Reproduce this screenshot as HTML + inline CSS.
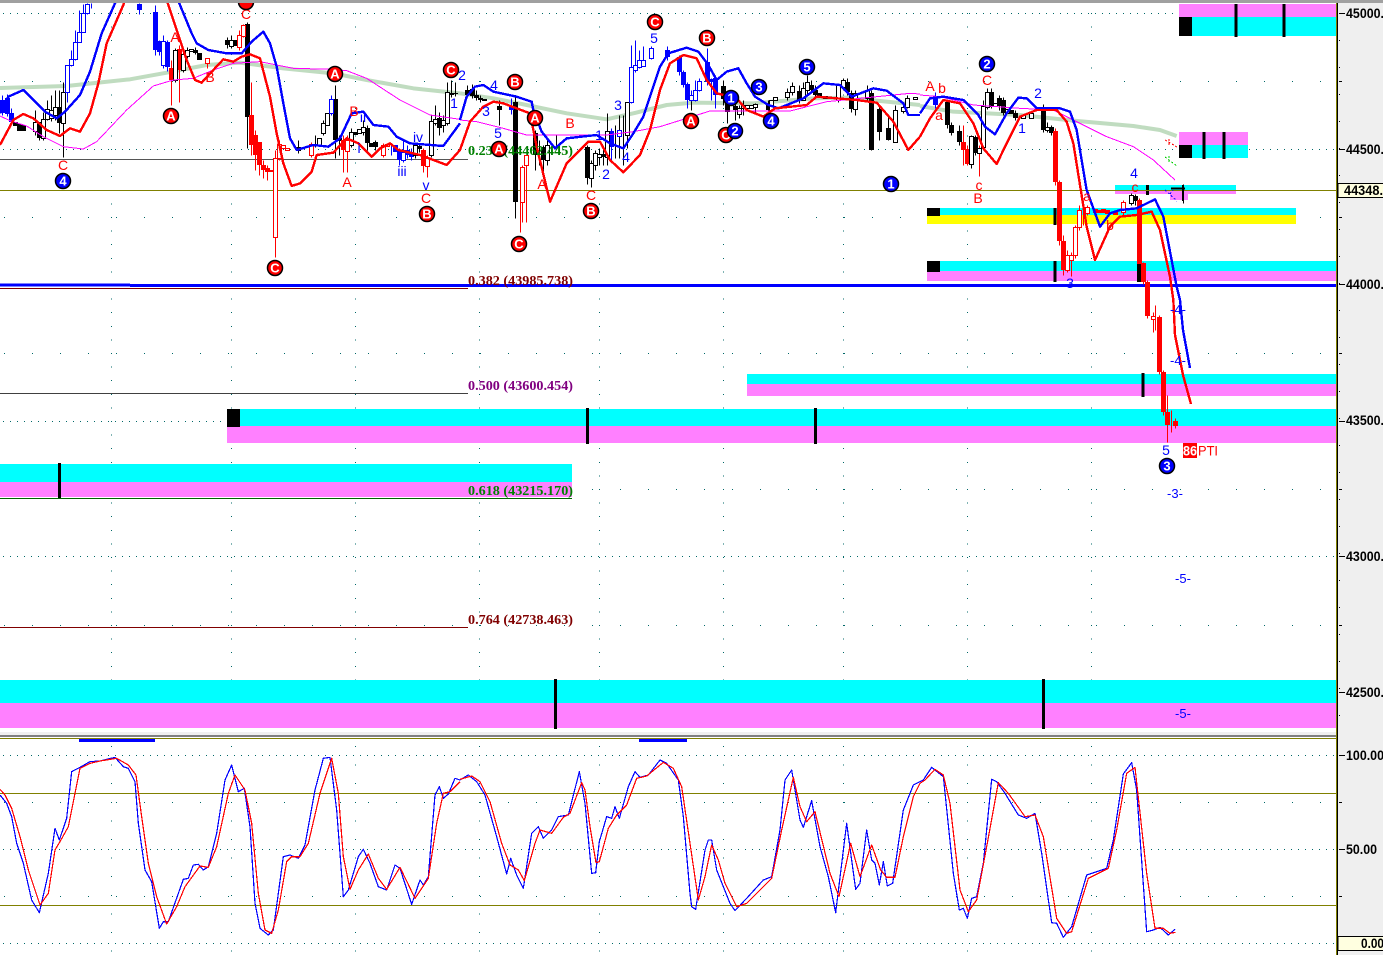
<!DOCTYPE html>
<html lang="en">
<head>
<meta charset="utf-8">
<title>Chart</title>
<style>
html,body{margin:0;padding:0;background:#fff;width:1383px;height:955px;overflow:hidden}
svg{display:block}
text{font-family:"Liberation Sans",sans-serif}
.l{font-size:14px;fill:#f00;text-anchor:middle}
.b{font-size:14px;fill:#00f;text-anchor:middle}
.s{font-size:13px;fill:#00f;text-anchor:middle}
.w{font-size:13px;font-weight:bold;fill:#fff;text-anchor:middle;transform:translateY(.5px)}
.f{font-family:"Liberation Serif",serif;font-size:14px;font-weight:bold}
.a{font-size:14px;font-weight:bold;fill:#000}
.cr{fill:#f00;stroke:#000;stroke-width:1.5}
.cb{fill:#00f;stroke:#000;stroke-width:1.5}
.z polyline{fill:none;vector-effect:non-scaling-stroke;stroke-linejoin:round}
</style>
</head>
<body>
<svg xmlns="http://www.w3.org/2000/svg" width="1383" height="955" viewBox="0 0 1383 955">
<defs><clipPath id="m"><rect x="0" y="3" width="1336" height="732"/></clipPath></defs>
<rect width="1383" height="955" fill="#fff"/>
<rect x="1337" y="0" width="46" height="955" fill="#efefef"/>

<!-- grid -->
<g fill="none" stroke="#006868" shape-rendering="crispEdges">
<path stroke-dasharray="1 6" d="M3 13.5H1336M3 149.5H1336M3 284.5H1336M3 421.5H1336M3 556.5H1336M3 692.5H1336M3 755.5H1336M3 849.5H1336M3 943.5H1336"/>
<path stroke-dasharray="1 27" d="M4 81.5H1336M4 217.5H1336M4 353.5H1336M4 489.5H1336M4 625.5H1336M4 802.5H1336M4 896.5H1336"/>
<path stroke-dasharray="1 12.6" d="M111.5 13V735M231.5 13V735M355.5 13V735M479.5 13V735M599.5 13V735M723.5 13V735M843.5 13V735M967.5 13V735M1091.5 13V735"/>
<path stroke-dasharray="1 17.6" d="M111.5 746V955M231.5 746V955M355.5 746V955M479.5 746V955M599.5 746V955M723.5 746V955M843.5 746V955M967.5 746V955M1091.5 746V955"/>
</g>

<!-- zones -->
<g shape-rendering="crispEdges">
<rect x="1179" y="4" width="157" height="13" fill="#ff80ff"/><rect x="1179" y="17" width="157" height="19" fill="#0ff"/><rect x="1179" y="17" width="13" height="19" fill="#000"/>
<rect x="1179" y="132" width="69" height="13" fill="#ff80ff"/><rect x="1179" y="145" width="69" height="13" fill="#0ff"/><rect x="1179" y="145" width="13" height="13" fill="#000"/>
<rect x="1115" y="185" width="121" height="5" fill="#0ff"/><rect x="1115" y="190" width="121" height="4" fill="#ff80ff"/><rect x="1170" y="194" width="18" height="6" fill="#ff80ff"/>
<rect x="927" y="208" width="369" height="7" fill="#0ff"/><rect x="927" y="215" width="369" height="9" fill="#ff0"/><rect x="927" y="208" width="13" height="8" fill="#000"/>
<rect x="927" y="261" width="409" height="10" fill="#0ff"/><rect x="927" y="271" width="409" height="10" fill="#ff80ff"/><rect x="927" y="261" width="13" height="11" fill="#000"/>
<rect x="747" y="374" width="589" height="10" fill="#0ff"/><rect x="747" y="384" width="589" height="12" fill="#ff80ff"/>
<rect x="227" y="409" width="1109" height="17" fill="#0ff"/><rect x="227" y="426" width="1109" height="17" fill="#ff80ff"/><rect x="227" y="409" width="13" height="18" fill="#000"/>
<rect x="0" y="464" width="572" height="18" fill="#0ff"/><rect x="0" y="482" width="572" height="15" fill="#ff80ff"/>
<rect x="0" y="680" width="1336" height="23" fill="#0ff"/><rect x="0" y="703" width="1336" height="25" fill="#ff80ff"/>
<path stroke="#000" stroke-width="3" fill="none" d="M1236 4V37M1284 4V37M1204 132V159M1224 132V159M1147.500 185V195M1055 261V282M1055 208V225M1143 373V397M587.500 408V444M815.500 408V444M59.500 463V499M555.500 679V729M1043.500 679V729"/>
</g>

<!-- horizontal levels -->
<g fill="none" shape-rendering="crispEdges">
<path stroke="#555" d="M0 159.500H468"/>
<path stroke="#808000" d="M0 190.500H1336"/>
<path stroke="#800000" d="M0 288.500H468M0 627.500H468"/>
<path stroke="#404040" d="M0 393.500H468"/>
<path stroke="#006400" d="M0 498.500H572"/>
<path stroke="#00f" stroke-width="3" d="M0 285H130"/>
<path stroke="#00f" stroke-width="3" d="M130 285.500H1336"/>
<path stroke="#808000" d="M0 738.500H1336M0 793.500H1336M0 905.500H1336"/>
</g>

<g clip-path="url(#m)">
<!-- sage MA -->
<g class="z">
<polyline transform="scale(.33333)" stroke="#c0dcc0" stroke-width="4" points="0,264 200,258 390,238 500,218 620,195 720,188 850,205 1000,220 1100,240 1240,265 1380,280"/>
<polyline transform="translate(460 0) scale(.33333)" stroke="#c0dcc0" stroke-width="4" points="0,280 100,295 200,315 320,340 440,358 520,340 620,315 700,308 880,310 1060,295 1160,293 1380,315"/>
<polyline transform="translate(920 0) scale(.33333)" stroke="#c0dcc0" stroke-width="4" points="0,318 100,335 300,345 460,362 640,378 720,390 770,408"/>
</g>

<!-- wicks -->
<g fill="none" stroke-width="1" transform="translate(.5 .5)" shape-rendering="crispEdges">
<path stroke="#000" d="M35 110V135M39 122V140M43 112V140M47 100V120M51 95V121M55 90V120M59 90V133M63 82V157M175 48V82M183 47V72M187 47V58M195 47V54M227 37V48M231 35V48M247 22V148M298 140V153M315 135V147M323 120V135M331 95V115M335 85V158M339 135V155M351 128V147M363 120V135M367 125V150M375 140V150M415 142V158M419 143V152M431 115V157M435 105V125M439 112V135M443 115V132M447 82V125M451 80V97M455 82V96M467 85V97M472 84V98M476 90V100M480 95V102M499 100V125M515 95V218M535 130V170M539 140V165M543 145V176M547 140V165M556 135V148M587 145V184M591 160V187M595 150V170M599 148V165M603 148V165M607 113V165M615 125V158M619 115V158M623 115V165M627 102V148M691 90V110M723 80V105M727 95V123M735 100V120M739 105V118M743 100V115M755 103V112M768 100V113M787 88V100M792 82V95M799 85V103M803 82V100M807 75V95M811 80V92M815 85V97M838 85V102M843 78V90M847 78V95M851 90V112M855 90V115M867 85V100M871 90V150M879 105V140M888 115V140M895 105V142M903 103V113M907 95V108M947 100V128M951 122V135M959 125V145M971 135V168M975 135V155M983 100V150M987 88V109M991 88V108M999 95V110M1003 97V115M1015 110V120M1043 104V132M1047 122V132M1051 125V135M1131 193V205M1135 194V205M1183 184V203"/>
<path stroke="#00f" d="M2 95V115M7 94V116M11 108V125M67 65V102M71 50V66M75 30V60M79 10V40M83 4V32M87 3V14M91 3V8M139 3V14M155 5V55M159 40V55M163 35V68M167 40V71M331 95V115M391 143V155M399 148V165M403 140V162M407 145V158M411 148V160M511 98V114M611 128V160M631 45V103M635 40V72M639 50V68M643 46V66M651 46V59M667 46V60M679 55V75M683 70V87M687 82V108M691 90V101M695 80V101M699 78V91M707 48V85M711 78V100M715 75V108M935 92V108"/>
<path stroke="#f00" d="M171 60V105M179 45V102M207 60V68M239 30V50M243 24V37M251 82V155M255 130V170M259 142V175M263 160V178M267 165V180M275 150V257M279 140V160M311 142V157M343 135V172M347 135V172M383 143V157M423 148V172M427 155V177M520 200V232M522 165V222M526 155V222M963 125V165M967 145V165M979 145V176M1055 128V185M1059 180V245M1063 235V275M1067 250V272M1071 252V276M1075 225V258M1079 205V230M1083 200V225M1087 205V215M1123 200V215M1139 198V266M1143 262V284M1147 280V318M1153 312V332M1155 305V330M1159 315V374M1163 370V415M1167 395V442M1171 410V432M1175 418V428"/>
</g>

<!-- solid bodies -->
<g fill="none" stroke-width="5" transform="translate(.5 0)" shape-rendering="crispEdges">
<path stroke="#000" d="M15 122V126M19 124V131M23 125V131M39 122V138M59 107V123M195 50V53M199 53V60M227 40V45M235 40V46M247 24V117M298 147V151M335 99V140M339 138V141M355 132V135M367 128V143M371 143V147M375 142V147M419 146V149M439 118V128M451 93V95M455 93V94M467 90V95M472 89V96M476 95V98M480 98V100M484 99V101M499 106V110M515 102V202M535 133V155M543 147V160M587 147V178M603 154V157M723 86V99M727 97V112M735 106V110M768 103V110M799 91V100M811 85V90M815 90V95M819 93V97M825 96V99M847 82V92M851 93V109M871 93V150M879 109V132M888 128V140M947 102V125M951 125V133M959 131V142M975 137V153M991 92V107M999 98V106M1003 100V113M1011 110V114M1015 113V118M1043 107V130M1051 127V133M1135 196V201M1139 264V282"/>
<path stroke="#00f" d="M2 100V113M7 98V114M11 113V122M139 4V10M155 12V50M159 41V52M167 42V67M395 145V152M399 150V160M407 150V155M411 152V157M511 106V110M611 131V147M667 50V57M679 57V72M683 72V85M687 84V100M707 62V82M711 79V82M715 78V95M935 98V105"/>
<path stroke="#f00" d="M171 68V80M179 49V70M251 115V145M255 135V155M259 142V165M263 165V170M267 168V172M271 170V172M343 140V150M423 150V166M963 142V150M967 149V164M1055 131V182M1059 182V241M1063 241V270M1095 209V213M1099 210V213M1103 209V213M1107 210V214M1115 212V215M1139 200V264M1143 263V282M1147 282V316M1159 317V372M1163 372V412M1167 412V425M1175 421V426"/>
</g>

<!-- hollow bodies -->
<g fill="#fff" stroke-width="1" transform="translate(.5 .5)" shape-rendering="crispEdges">
<path stroke="#000" d="M33 122h4v9h-4zM41 119h4v19h-4zM45 109h4v10h-4zM49 110h4v8h-4zM53 107h4v8h-4zM61 92h4v31h-4zM173 50h4v30h-4zM181 54h4v16h-4zM185 50h4v6h-4zM189 49h4v2h-4zM229 40h4v6h-4zM317 138h4v7h-4zM321 123h4v10h-4zM325 113h4v12h-4zM349 132h4v13h-4zM357 129h4v4h-4zM361 127h4v5h-4zM413 145h4v10h-4zM429 121h4v34h-4zM433 119h4v4h-4zM441 120h4v5h-4zM445 92h4v31h-4zM545 145h4v15h-4zM589 163h4v15h-4zM593 153h4v12h-4zM597 154h4v3h-4zM605 131h4v26h-4zM625 102h4v33h-4zM737 108h4v6h-4zM741 105h4v3h-4zM745 105h4v3h-4zM749 105h4v3h-4zM753 104h4v3h-4zM769 100h4v10h-4zM773 97h4v3h-4zM785 92h4v5h-4zM790 86h4v6h-4zM801 88h4v12h-4zM805 82h4v8h-4zM836 85h4v15h-4zM841 80h4v7h-4zM853 93h4v16h-4zM865 90h4v8h-4zM893 110h4v32h-4zM901 107h4v4h-4zM905 98h4v9h-4zM913 97h4v2h-4zM969 136h4v28h-4zM977 148h4v5h-4zM981 106h4v41h-4zM985 92h4v15h-4zM993 103h4v3h-4zM1005 109h4v4h-4zM1021 115h4v3h-4zM1029 113h4v5h-4zM1045 127h4v3h-4zM1129 195h4v8h-4z"/>
<path stroke="#00f" d="M65 65h4v27h-4zM69 59h4v6h-4zM73 42h4v17h-4zM77 32h4v10h-4zM81 13h4v19h-4zM85 4h4v9h-4zM161 41h4v24h-4zM329 99h4v14h-4zM401 152h4v8h-4zM617 130h4v6h-4zM629 67h4v35h-4zM633 65h4v5h-4zM637 60h4v7h-4zM641 60h4v6h-4zM649 48h4v10h-4zM689 95h4v5h-4zM693 90h4v10h-4zM697 81h4v9h-4z"/>
<path stroke="#f00" d="M205 58h4v5h-4zM237 35h4v12h-4zM241 25h4v11h-4zM273 158h4v79h-4zM277 144h4v14h-4zM281 145h4v3h-4zM285 148h4v2h-4zM309 144h4v11h-4zM345 140h4v11h-4zM381 145h4v10h-4zM385 144h4v2h-4zM425 158h4v8h-4zM520 167h4v35h-4zM524 155h4v10h-4zM1065 255h4v15h-4zM1069 255h4v5h-4zM1073 227h4v28h-4zM1077 210h4v17h-4zM1085 207h4v6h-4zM1121 202h4v10h-4zM1151 316h4v3h-4z"/>
</g>

<path fill="none" stroke="#000" stroke-width="2" shape-rendering="crispEdges" d="M1171 188.500H1185M1183 185V201"/>

<!-- bands -->
<g class="z" shape-rendering="crispEdges">
<polyline transform="scale(.33333)" stroke="#ff00ff" stroke-width="1" points="0,348 30,362 80,378 130,410 190,440 250,447 290,425 380,330 460,258 520,240 580,235 640,210 700,190 780,185 880,205 1000,208 1040,212 1100,235 1200,300 1290,345 1380,358"/>
<polyline transform="translate(460 0) scale(.33333)" stroke="#ff00ff" stroke-width="1" points="0,360 50,365 130,385 200,405 300,405 440,405 520,395 600,380 680,355 750,333 880,333 990,333 1100,305 1250,290 1350,280 1380,282"/>
<polyline transform="translate(920 0) scale(.33333)" stroke="#ff00ff" stroke-width="1" points="0,285 60,290 160,315 300,325 400,330 470,365 560,410 640,440 700,480 765,540"/>

<polyline transform="scale(.33333)" stroke="#00f" stroke-width="2.400" points="0,340 25,290 70,270 100,300 135,335 170,355 195,335 240,285 270,215 305,100 345,10 365,-30 520,-30 540,15 575,100 590,130 625,150 680,160 725,160 755,125 790,95 810,130 830,200 850,310 870,415 890,450 940,435 985,440 1020,415 1055,340 1090,335 1120,375 1165,380 1190,410 1230,430 1330,438 1380,370"/>
<polyline transform="translate(460 0) scale(.33333)" stroke="#00f" stroke-width="2.400" points="0,360 20,290 45,260 70,255 100,275 170,290 215,305 220,330 245,395 285,445 320,415 410,405 450,430 490,445 520,400 550,350 600,200 625,160 680,143 715,155 745,195 770,240 800,215 835,205 860,250 885,290 925,315 955,325 1030,295 1090,250 1140,255 1175,290 1240,265 1280,272 1330,310 1345,345 1380,345"/>
<polyline transform="translate(920 0) scale(.33333)" stroke="#00f" stroke-width="2.400" points="0,340 30,295 70,290 130,300 160,330 175,345 195,380 225,403 260,340 295,293 320,295 350,325 370,325 420,325 450,335 470,390 500,570 540,680 570,640 600,630 650,625 705,598 730,650 770,860 780,900 789,990 810,1104"/>

<polyline transform="scale(.33333)" stroke="#f00" stroke-width="2.400" points="0,435 40,360 70,342 100,355 140,390 180,408 210,385 240,395 270,340 295,250 320,130 370,15 385,-30 490,-30 505,15 530,90 560,180 585,240 605,248 640,210 670,178 700,185 725,170 750,163 780,175 810,290 830,400 850,490 875,558 900,550 935,515 950,465 1000,458 1040,415 1075,430 1115,470 1140,445 1170,430 1195,450 1260,465 1340,495 1380,450"/>
<polyline transform="translate(460 0) scale(.33333)" stroke="#f00" stroke-width="2.400" points="0,450 30,365 70,320 100,305 130,310 210,340 230,440 270,605 320,490 385,425 420,425 450,480 490,517 540,465 570,390 600,270 630,190 670,165 710,175 740,240 770,280 830,295 860,330 910,350 945,325 1040,315 1070,290 1130,295 1190,300 1250,308 1300,365 1345,450 1380,410"/>
<polyline transform="translate(920 0) scale(.33333)" stroke="#f00" stroke-width="2.400" points="0,410 30,355 70,300 120,310 160,370 190,445 230,492 260,430 300,350 350,330 410,330 440,365 460,430 500,680 525,780 570,680 600,650 650,645 695,635 720,690 750,830 760,900 765,1005 789,1125 813,1212"/>
</g>

<!-- fib labels -->
<text class="f" x="468" y="155" fill="#008000" textLength="105" lengthAdjust="spacingAndGlyphs">0.236 (44462.445)</text>
<text class="f" x="468" y="285" fill="#800000" textLength="105" lengthAdjust="spacingAndGlyphs">0.382 (43985.738)</text>
<text class="f" x="468" y="390" fill="#800080" textLength="105" lengthAdjust="spacingAndGlyphs">0.500 (43600.454)</text>
<text class="f" x="468" y="495" fill="#008000" textLength="105" lengthAdjust="spacingAndGlyphs">0.618 (43215.170)</text>
<text class="f" x="468" y="624" fill="#800000" textLength="105" lengthAdjust="spacingAndGlyphs">0.764 (42738.463)</text>

<!-- x marks -->
<g fill="none" stroke-dasharray="2 2" shape-rendering="crispEdges">
<path stroke="#f00" d="M1165 140L1177 147M1169 139V147"/>
<path stroke="#0c0" d="M1165 157L1177 166M1169 156V164"/>
<path stroke="#00f" d="M1165 190L1177 201M1170 194L1173 190"/>
</g>

<!-- letters -->
<text class="l" x="63" y="170">C</text><text class="l" x="246" y="19">C</text><text class="l" x="175" y="42">A</text><text class="l" x="210" y="82">B</text><text class="l" x="347" y="187">A</text><text class="l" x="354" y="116">B</text><text class="l" x="426" y="203">C</text><text class="l" x="570" y="128">B</text><text class="l" x="542" y="189">A</text><text class="l" x="591" y="200">C</text><text class="l" x="930" y="91">A</text><text class="l" x="942" y="93">b</text><text class="l" x="939" y="120">a</text><text class="l" x="987" y="85">C</text><text class="l" x="979" y="190">c</text><text class="l" x="978" y="203">B</text><text class="l" x="1087" y="201">a</text><text class="l" x="1110" y="230">b</text><text class="l" x="1135" y="192">c</text>
<text class="b" x="363" y="122">ii</text><text class="b" x="359" y="153">i</text><text class="b" x="402" y="176">iii</text><text class="b" x="418" y="142">iv</text><text class="b" x="426" y="190">v</text><text class="b" x="454" y="108">1</text><text class="b" x="462" y="80">2</text><text class="b" x="494" y="90">4</text><text class="b" x="486" y="116">3</text><text class="b" x="498" y="138">5</text><text class="b" x="599" y="140">1</text><text class="b" x="606" y="179">2</text><text class="b" x="618" y="110">3</text><text class="b" x="626" y="162">4</text><text class="b" x="654" y="43">5</text><text class="b" x="1022" y="133">1</text><text class="b" x="1038" y="98">2</text><text class="b" x="1070" y="288">3</text><text class="b" x="1134" y="178">4</text><text class="b" x="1166" y="455">5</text><text class="s" x="1178" y="314">-4-</text><text class="s" x="1178" y="365">-4-</text><text class="s" x="1175" y="498">-3-</text><text class="s" x="1183" y="583">-5-</text><text class="s" x="1183" y="718">-5-</text>

<!-- circles -->
<g>
<circle class="cr" cx="246" cy="2" r="7.500"/>
<circle class="cr" cx="171" cy="116" r="7.500"/><text class="w" x="171" y="120">A</text>
<circle class="cr" cx="275" cy="268" r="7.500"/><text class="w" x="275" y="272">C</text>
<circle class="cr" cx="335" cy="74" r="7.500"/><text class="w" x="335" y="78">A</text>
<circle class="cr" cx="451" cy="70" r="7.500"/><text class="w" x="451" y="74">C</text>
<circle class="cr" cx="427" cy="214" r="7.500"/><text class="w" x="427" y="218">B</text>
<circle class="cr" cx="515" cy="82" r="7.500"/><text class="w" x="515" y="86">B</text>
<circle class="cr" cx="535" cy="118" r="7.500"/><text class="w" x="535" y="122">A</text>
<circle class="cr" cx="499" cy="149" r="7.500"/><text class="w" x="499" y="153">A</text>
<circle class="cr" cx="519" cy="244" r="7.500"/><text class="w" x="519" y="248">C</text>
<circle class="cr" cx="591" cy="211" r="7.500"/><text class="w" x="591" y="215">B</text>
<circle class="cr" cx="655" cy="22" r="7.500"/><text class="w" x="655" y="26">C</text>
<circle class="cr" cx="707" cy="38" r="7.500"/><text class="w" x="707" y="42">B</text>
<circle class="cr" cx="691" cy="121" r="7.500"/><text class="w" x="691" y="125">A</text>
<circle class="cr" cx="726" cy="135" r="7.500"/><text class="w" x="726" y="139">C</text>
<circle class="cb" cx="63" cy="181" r="7.500"/><text class="w" x="63" y="185">4</text>
<circle class="cb" cx="731" cy="98" r="7.500"/><text class="w" x="731" y="102">1</text>
<circle class="cb" cx="735" cy="131" r="7.500"/><text class="w" x="735" y="135">2</text>
<circle class="cb" cx="759" cy="87" r="7.500"/><text class="w" x="759" y="91">3</text>
<circle class="cb" cx="771" cy="121" r="7.500"/><text class="w" x="771" y="125">4</text>
<circle class="cb" cx="807" cy="67" r="7.500"/><text class="w" x="807" y="71">5</text>
<circle class="cb" cx="891" cy="184" r="7.500"/><text class="w" x="891" y="188">1</text>
<circle class="cb" cx="987" cy="64" r="7.500"/><text class="w" x="987" y="68">2</text>
<circle class="cb" cx="1167" cy="466" r="7.500"/><text class="w" x="1167" y="470">3</text>
</g>
<rect x="1183" y="443" width="14" height="15" fill="#f00"/>
<text x="1183" y="455.500" textLength="14" lengthAdjust="spacingAndGlyphs" style="font-size:14px;font-weight:bold;fill:#fff">86</text>
<text x="1198" y="455.500" textLength="20" lengthAdjust="spacingAndGlyphs" style="font-size:14px;fill:#f00">PTI</text>
</g>

<!-- oscillator -->
<g class="z" shape-rendering="crispEdges">
<polyline transform="translate(0 730) scale(.33333)" stroke="#00f" stroke-width="1.200" points="0,195 20,220 35,260 50,340 70,400 95,510 118,548 145,430 165,295 178,330 200,265 215,125 240,112 270,95 300,93 345,82 370,110 385,115 405,155 415,280 435,420 455,455 478,595 490,575 505,575 550,448 565,445 580,405 595,403 610,420 625,410 650,310 675,150 695,105 715,185 733,175 750,290 765,520 780,595 805,615 820,600 850,380 870,375 895,385 915,345 945,180 970,85 990,82 1010,240 1030,500 1045,480 1075,380 1090,358 1110,400 1135,470 1160,480 1185,405 1200,415 1235,523 1260,450 1270,465 1285,440 1305,195 1318,170 1330,205 1345,192 1365,145 1380,150"/>
<polyline transform="translate(460 730) scale(.33333)" stroke="#00f" stroke-width="1.200" points="0,150 25,135 50,155 75,195 110,320 140,432 152,385 170,435 190,475 215,310 235,290 250,325 275,300 295,260 325,255 358,125 375,220 395,430 407,428 418,335 440,260 455,265 465,230 478,265 505,170 525,125 540,142 565,135 600,90 620,100 655,150 670,260 690,490 695,530 707,538 735,360 745,330 755,330 770,420 810,520 825,542 860,505 910,450 935,440 960,300 975,150 995,120 1020,270 1030,292 1055,212 1080,350 1105,440 1127,548 1160,280 1187,478 1200,460 1220,300 1235,390 1245,400 1258,465 1270,395 1282,468 1298,460 1330,240 1360,165 1380,155"/>
<polyline transform="translate(920 730) scale(.33333)" stroke="#00f" stroke-width="1.200" points="0,155 10,150 35,112 70,140 100,430 118,540 130,535 142,565 155,505 170,500 190,400 215,148 230,155 255,190 295,255 320,265 345,250 365,370 395,578 410,580 430,622 455,590 500,435 560,415 580,330 610,132 635,98 650,180 680,605 700,600 720,592 745,615 765,598"/>
<polyline transform="translate(0 730) scale(.33333)" stroke="#f00" stroke-width="1.200" points="0,178 15,195 35,235 60,320 85,420 120,525 145,490 165,360 180,335 205,290 240,115 270,100 300,93 350,85 385,105 408,135 425,260 445,400 470,500 500,582 530,530 555,470 600,408 625,412 650,350 685,190 705,135 735,180 755,280 775,490 795,600 815,610 835,540 860,395 875,380 900,380 925,340 960,190 995,85 1015,190 1030,380 1050,478 1075,420 1105,372 1135,445 1160,478 1200,412 1245,505 1285,445 1310,280 1330,190 1350,185 1380,155"/>
<polyline transform="translate(460 730) scale(.33333)" stroke="#f00" stroke-width="1.200" points="0,148 35,138 60,155 90,215 125,340 150,405 175,420 193,452 225,340 240,300 275,310 310,262 330,250 365,158 375,180 390,290 408,398 418,395 445,295 470,255 500,225 530,145 560,138 610,97 640,115 665,170 690,340 715,510 735,440 755,345 775,390 795,460 830,530 860,520 935,445 965,300 1000,142 1020,230 1040,275 1065,245 1110,430 1137,500 1172,340 1200,440 1235,345 1262,420 1280,442 1305,442 1330,320 1360,200 1380,160"/>
<polyline transform="translate(920 730) scale(.33333)" stroke="#f00" stroke-width="1.200" points="0,160 15,150 45,118 70,135 90,220 120,480 145,545 170,510 200,350 235,158 265,190 315,260 345,255 370,320 410,565 440,610 455,605 505,445 565,415 590,300 620,130 645,112 680,430 705,595 730,595 750,610 767,607"/>
</g>
<g shape-rendering="crispEdges">
<rect x="79" y="739" width="76" height="3" fill="#00f"/>
<rect x="639" y="739" width="48" height="3" fill="#00f"/>
</g>

<!-- chrome lines -->
<g shape-rendering="crispEdges" fill="none">
<rect x="0" y="0" width="1383" height="3" fill="#a0a0a0"/>
<rect x="0" y="732" width="1336" height="3" fill="#f0f0f0"/>
<rect x="0" y="735" width="1336" height="2" fill="#808080"/>
<path stroke="#808000" d="M1336.500 3V955"/>
<path stroke="#000" d="M1337.500 3V955"/>
<path stroke="#000" d="M1339 13.500h6M1339 149.500h6M1339 284.500h6M1339 421.500h6M1339 556.500h6M1339 692.500h6M1339 755.500h6M1339 849.500h6M1339 81.500h3M1339 217.500h3M1339 353.500h3M1339 489.500h3M1339 625.500h3M1339 802.500h3M1339 896.500h3"/>
<path stroke="#000" stroke-dasharray="1 26" d="M1339.500 40V735"/>
</g>

<!-- axis labels -->
<text class="a" x="1346" y="18" textLength="38" lengthAdjust="spacingAndGlyphs">45000.</text>
<text class="a" x="1346" y="154" textLength="38" lengthAdjust="spacingAndGlyphs">44500.</text>
<text class="a" x="1346" y="289" textLength="38" lengthAdjust="spacingAndGlyphs">44000.</text>
<text class="a" x="1346" y="425" textLength="38" lengthAdjust="spacingAndGlyphs">43500.</text>
<text class="a" x="1346" y="561" textLength="38" lengthAdjust="spacingAndGlyphs">43000.</text>
<text class="a" x="1346" y="697" textLength="38" lengthAdjust="spacingAndGlyphs">42500.</text>
<rect x="1338" y="183.500" width="46" height="14" fill="#ffffe0" stroke="#000" shape-rendering="crispEdges"/>
<text class="a" x="1344" y="195" textLength="39" lengthAdjust="spacingAndGlyphs">44348.</text>
<text class="a" x="1346" y="760" textLength="38" lengthAdjust="spacingAndGlyphs">100.00</text>
<text class="a" x="1346" y="854" textLength="31" lengthAdjust="spacingAndGlyphs">50.00</text>
<rect x="1338" y="936.500" width="46" height="14" fill="#ffffe0" stroke="#000" shape-rendering="crispEdges"/>
<text class="a" x="1361" y="948" textLength="23" lengthAdjust="spacingAndGlyphs">0.00</text>
</svg>
</body>
</html>
